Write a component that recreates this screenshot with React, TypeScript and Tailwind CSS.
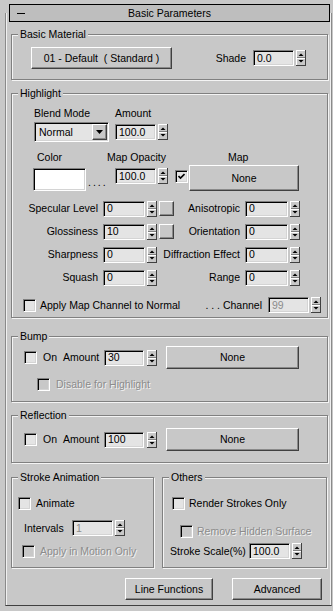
import React from 'react';

const FONT = "font-['Liberation_Sans',Arial,sans-serif]";

const raised =
  'border border-t-white border-l-white border-r-[#404040] border-b-[#404040] shadow-[inset_-1px_-1px_0_#8a8a8a]';
const sunken =
  'border border-t-[#808080] border-l-[#808080] border-r-white border-b-white shadow-[inset_1px_1px_0_#000,inset_-1px_-1px_0_#d4d4d4]';
const dim = 'text-[#8c8c8c] [text-shadow:1px_1px_0_#f2f2f2]';

function Spinner({ cls = 'ml-[2px]' }: { cls?: string }) {
  return (
    <svg width="10" height="16" viewBox="0 0 10 16" className={`shrink-0 block ${cls}`}>
      <rect width="10" height="16" fill="#c8c8c8" />
      <path d="M0 0.5H9.5M0.5 0V15.5" stroke="#fff" />
      <path d="M0 15.5H10M9.5 0V16" stroke="#404040" />
      <path d="M1 7.5H9" stroke="#808080" />
      <path d="M1 8.5H9" stroke="#fff" />
      <path d="M2.5 6L5 3.5L7.5 6Z" fill="#000" />
      <path d="M2.5 10L5 12.5L7.5 10Z" fill="#000" />
    </svg>
  );
}

function Field({ value, w = 'w-[41px]', disabled }: { value: string; w?: string; disabled?: boolean }) {
  return (
    <div className={`${w} h-[16px] shrink-0 ${sunken} bg-[#e4e4e4] pl-[3px] flex items-center ${disabled ? 'text-[#8c8c8c]' : ''}`}>
      {value}
    </div>
  );
}

function Spin({ value, w, disabled, cls = '' }: { value: string; w?: string; disabled?: boolean; cls?: string }) {
  return (
    <div className={`flex items-center shrink-0 ${cls}`}>
      <Field value={value} w={w} disabled={disabled} />
      <Spinner />
    </div>
  );
}

function Check({ checked, disabled, cls = '' }: { checked?: boolean; disabled?: boolean; cls?: string }) {
  return (
    <div className={`w-[13px] h-[13px] shrink-0 ${sunken} ${disabled ? 'bg-[#c8c8c8]' : 'bg-[#e4e4e4]'} flex items-center justify-center ${cls}`}>
      {checked && (
        <svg width="7" height="7" viewBox="0 0 7 7" className="block">
          <path d="M0.5 3L2.5 5L6.5 1" stroke="#000" strokeWidth="1.6" fill="none" />
        </svg>
      )}
    </div>
  );
}

function Btn({ children, cls }: { children: React.ReactNode; cls: string }) {
  return (
    <div className={`${cls} shrink-0 ${raised} bg-[#c8c8c8] flex items-center justify-center whitespace-pre`}>
      {children}
    </div>
  );
}

function Group({ title, cls, children }: { title: string; cls: string; children?: React.ReactNode }) {
  return (
    <div className={`${cls} shrink-0 border border-[#808080] shadow-[1px_1px_0_#f4f4f4,inset_1px_1px_0_#f4f4f4]`}>
      <div className="-mt-[7px] ml-[6px] px-[2px] w-fit bg-[#c8c8c8] leading-[13px]">{title}</div>
      {children}
    </div>
  );
}

function ParamRow({ label, value, square, rlabel, rvalue }: { label: string; value: string; square?: boolean; rlabel: string; rvalue: string }) {
  return (
    <div className="h-[23px] flex items-center">
      <div className="w-[86px] flex justify-end whitespace-nowrap">{label}</div>
      <Spin value={value} w="w-[42px]" cls="ml-[5px]" />
      {square ? <div className={`ml-[2px] w-[15px] h-[15px] shrink-0 ${raised} bg-[#c8c8c8]`} /> : <div className="ml-[2px] w-[15px] shrink-0" />}
      <div className="w-[66px] flex justify-end whitespace-nowrap">{rlabel}</div>
      <Spin value={rvalue} w="w-[43px]" cls="ml-[5px]" />
    </div>
  );
}

export default function App() {
  return (
    <div className={`w-[333px] h-[611px] bg-[#c8c8c8] overflow-hidden pt-[13px] text-[10.5px] leading-[13px] text-black ${FONT}`}>
      <div className="ml-[5px] w-[327px] h-[593px] flex flex-col items-start border-l border-r border-b border-l-[#8a8a8a] border-r-[#8a8a8a] border-b-[#404040] shadow-[inset_1px_0_0_#f0f0f0,inset_-1px_0_0_#f0f0f0]">
        {/* rollout header */}
        <div className="-mt-[9px] ml-[3px] w-[321px] h-[18px] shrink-0 border border-black bg-[#bebebe] flex items-center">
          <div className="ml-[7px] w-[8px] h-[1px] bg-black shrink-0" />
          <span className="flex-1 text-center mr-[15px]">Basic Parameters</span>
        </div>

        <Group title="Basic Material" cls="mt-[12px] ml-[5px] w-[317px] h-[46px]">
          <div className="mt-[6px] h-[22px] flex items-center">
            <Btn cls="ml-[19px] w-[141px] h-[22px]">{'01 - Default  ( Standard )'}</Btn>
            <span className="ml-auto">Shade</span>
            <Spin value="0.0" cls="ml-[7px] mr-[21px]" />
          </div>
        </Group>

        <Group title="Highlight" cls="mt-[13px] ml-[5px] w-[317px] h-[225px]">
          <div className="mt-[7px] h-[13px] flex">
            <span className="ml-[22px] w-[81px]">Blend Mode</span>
            <span>Amount</span>
          </div>
          <div className="mt-[2px] h-[20px] flex items-center">
            <div className={`ml-[22px] w-[75px] h-[20px] shrink-0 ${sunken} bg-[#e4e4e4] flex items-center`}>
              <span className="ml-[4px] flex-1">Normal</span>
              <div className={`w-[15px] h-[16px] mr-[1px] ${raised} bg-[#c8c8c8] flex items-center justify-center`}>
                <svg width="7" height="4" viewBox="0 0 7 4" className="block">
                  <path d="M0 0H7L3.5 4Z" fill="#000" />
                </svg>
              </div>
            </div>
            <Spin value="100.0" cls="ml-[6px]" />
          </div>
          <div className="mt-[9px] h-[13px] flex">
            <span className="ml-[25px] w-[70px]">Color</span>
            <span className="w-[121px]">Map Opacity</span>
            <span>Map</span>
          </div>
          <div className="mt-[1px] h-[26px] flex items-start">
            <div className={`ml-[21px] mt-[3px] w-[53px] h-[23px] shrink-0 ${sunken} bg-white`} />
            <span className="w-[29px] pl-[2px] mt-[11px] tracking-[2px] shrink-0">....</span>
            <Spin value="100.0" cls="mt-[3px]" />
            <Check checked cls="ml-[7px] mt-[5px]" />
            <Btn cls="ml-[1px] w-[110px] h-[26px]">None</Btn>
          </div>
          <div className="mt-[6px]">
            <ParamRow label="Specular Level" value="0" square rlabel="Anisotropic" rvalue="0" />
            <ParamRow label="Glossiness" value="10" square rlabel="Orientation" rvalue="0" />
            <ParamRow label="Sharpness" value="0" rlabel="Diffraction Effect" rvalue="0" />
            <ParamRow label="Squash" value="0" rlabel="Range" rvalue="0" />
          </div>
          <div className="mt-[8px] h-[16px] flex items-center">
            <Check cls="ml-[11px]" />
            <span className="ml-[4px]">Apply Map Channel to Normal</span>
            <span className="ml-auto whitespace-pre">{'. . . Channel'}</span>
            <Spin value="99" disabled cls="ml-[6px] mr-[6px]" />
          </div>
        </Group>

        <Group title="Bump" cls="mt-[18px] ml-[5px] w-[317px] h-[66px]">
          <div className="mt-[3px] h-[23px] flex items-center">
            <Check cls="ml-[12px]" />
            <span className="ml-[6px] w-[20px]">On</span>
            <span className="w-[41px]">Amount</span>
            <Field value="30" w="w-[40px]" />
            <Spinner cls="ml-[3px]" />
            <Btn cls="ml-[9px] w-[133px] h-[23px]">None</Btn>
          </div>
          <div className="mt-[9px] h-[13px] flex items-center">
            <Check disabled cls="ml-[25px]" />
            <span className={`ml-[6px] ${dim}`}>Disable for Highlight</span>
          </div>
        </Group>

        <Group title="Reflection" cls="mt-[13px] ml-[5px] w-[317px] h-[48px]">
          <div className="mt-[6px] h-[23px] flex items-center">
            <Check cls="ml-[12px]" />
            <span className="ml-[6px] w-[20px]">On</span>
            <span className="w-[41px]">Amount</span>
            <Field value="100" w="w-[40px]" />
            <Spinner cls="ml-[3px]" />
            <Btn cls="ml-[9px] w-[133px] h-[23px]">None</Btn>
          </div>
        </Group>

        <div className="mt-[14px] flex shrink-0">
          <Group title="Stroke Animation" cls="ml-[5px] w-[143px] h-[91px]">
            <div className="mt-[13px] h-[13px] flex items-center">
              <Check cls="ml-[6px]" />
              <span className="ml-[5px]">Animate</span>
            </div>
            <div className="mt-[10px] h-[16px] flex items-center">
              <span className="ml-[12px] w-[48px]">Intervals</span>
              <Spin value="1" disabled />
            </div>
            <div className="mt-[9px] h-[13px] flex items-center">
              <Check disabled cls="ml-[10px]" />
              <span className={`ml-[5px] ${dim}`}>Apply in Motion Only</span>
            </div>
          </Group>
          <Group title="Others" cls="ml-[8px] w-[165px] h-[91px]">
            <div className="mt-[13px] h-[13px] flex items-center">
              <Check cls="ml-[9px]" />
              <span className="ml-[4px]">Render Strokes Only</span>
            </div>
            <div className="mt-[15px] h-[13px] flex items-center">
              <Check disabled cls="ml-[17px]" />
              <span className={`ml-[4px] ${dim}`}>Remove Hidden Surface</span>
            </div>
            <div className="mt-[5px] h-[16px] flex items-center">
              <span className="ml-[7px] w-[79px] whitespace-nowrap">Stroke Scale(%)</span>
              <Spin value="100.0" />
            </div>
          </Group>
        </div>

        <div className="mt-[10px] flex shrink-0">
          <Btn cls="ml-[119px] w-[88px] h-[22px]">Line Functions</Btn>
          <Btn cls="ml-[19px] w-[90px] h-[22px]">Advanced</Btn>
        </div>
      </div>
    </div>
  );
}
